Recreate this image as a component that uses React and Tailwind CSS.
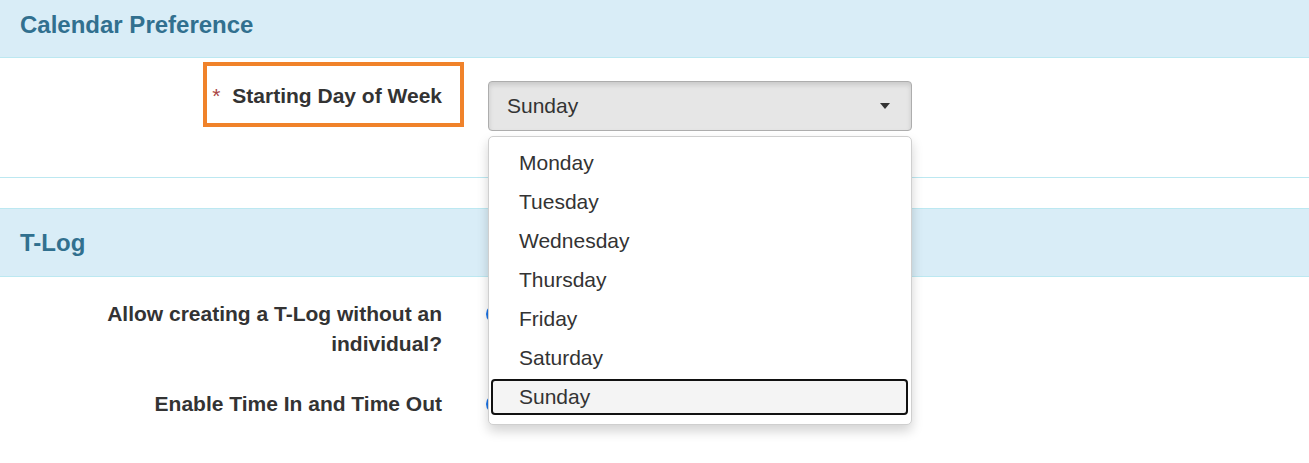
const days = ["Monday", "Tuesday", "Wednesday", "Thursday", "Friday", "Saturday", "Sunday"];

function PanelHeading({ title, className }) {
  return (
    <div className={`bg-[#d9edf7] border-[#bce8f1] px-[20px] ${className}`}>
      <h3 className="text-[24px] leading-[30px] font-bold text-[#31708f]">{title}</h3>
    </div>
  );
}

function Toggle() {
  return <div className="ml-[-2px] mt-[5px] w-[20px] h-[20px] rounded-full bg-[#1a73e8]"></div>;
}

function App() {
  const selected = "Sunday";

  return (
    <div
      className="relative w-full h-[463px] overflow-hidden bg-white text-[#333]"
      style={{ fontFamily: '"Liberation Sans", Arial, sans-serif' }}
    >
      {/* Calendar panel */}
      <div className="border-b border-[#bce8f1]">
        <PanelHeading title="Calendar Preference" className="h-[58px] pt-[10px] border-b" />
        <div className="h-[119px] pt-[4px] flex items-start">
          <div className="w-[464px] flex justify-end">
            <div className="border-4 border-[#f0822a] pl-[5px] pr-[18px] pt-[15px] pb-[12px] flex">
              <span className="text-[21px] leading-[30px] text-[#a94442] mr-[12px]">*</span>
              <label className="text-[21px] leading-[30px] font-bold">Starting Day of Week</label>
            </div>
          </div>
          <button className="ml-[24px] mt-[19px] w-[424px] h-[50px] rounded-[4px] border border-[#adadad] bg-[#e6e6e6] shadow-[inset_0_3px_5px_rgba(0,0,0,0.125)] pl-[18px] pr-[21px] flex items-center justify-between text-[21px] leading-[30px] text-[#333]">
            <span>{selected}</span>
            <span className="w-0 h-0 border-x-[5px] border-x-transparent border-t-[6px] border-t-[#333]"></span>
          </button>
        </div>
      </div>

      {/* T-Log panel */}
      <div className="mt-[30px] border-t border-[#bce8f1]">
        <PanelHeading title="T-Log" className="h-[68px] pt-[19px] border-b" />
        <div className="pt-[22px] pl-[22px] flex flex-col gap-[30px]">
          <div className="flex">
            <label className="w-[420px] text-right text-[21px] leading-[30px] font-bold">
              Allow creating a T-Log without an individual?
            </label>
            <div className="ml-[46px]">
              <Toggle />
            </div>
          </div>
          <div className="flex">
            <label className="w-[420px] text-right text-[21px] leading-[30px] font-bold">
              Enable Time In and Time Out
            </label>
            <div className="ml-[46px]">
              <Toggle />
            </div>
          </div>
        </div>
      </div>

      {/* Open dropdown menu */}
      <ul className="absolute left-[488px] top-[136px] w-[424px] bg-white border border-[#cfcfcf] rounded-[5px] shadow-[0_6px_12px_rgba(0,0,0,0.175)] pt-[6px] pb-[8px]">
        {days.map((d) => (
          <li key={d} className="h-[39px] py-[1.5px] pl-[2px] pr-[3px]">
            <div
              className={`h-full rounded-[4px] flex items-center text-[21px] leading-[30px] ${
                d === selected ? "border-2 border-[#111] bg-[#f4f4f4] pl-[26px]" : "pl-[28px]"
              }`}
            >
              {d}
            </div>
          </li>
        ))}
      </ul>
    </div>
  );
}

export default App;
